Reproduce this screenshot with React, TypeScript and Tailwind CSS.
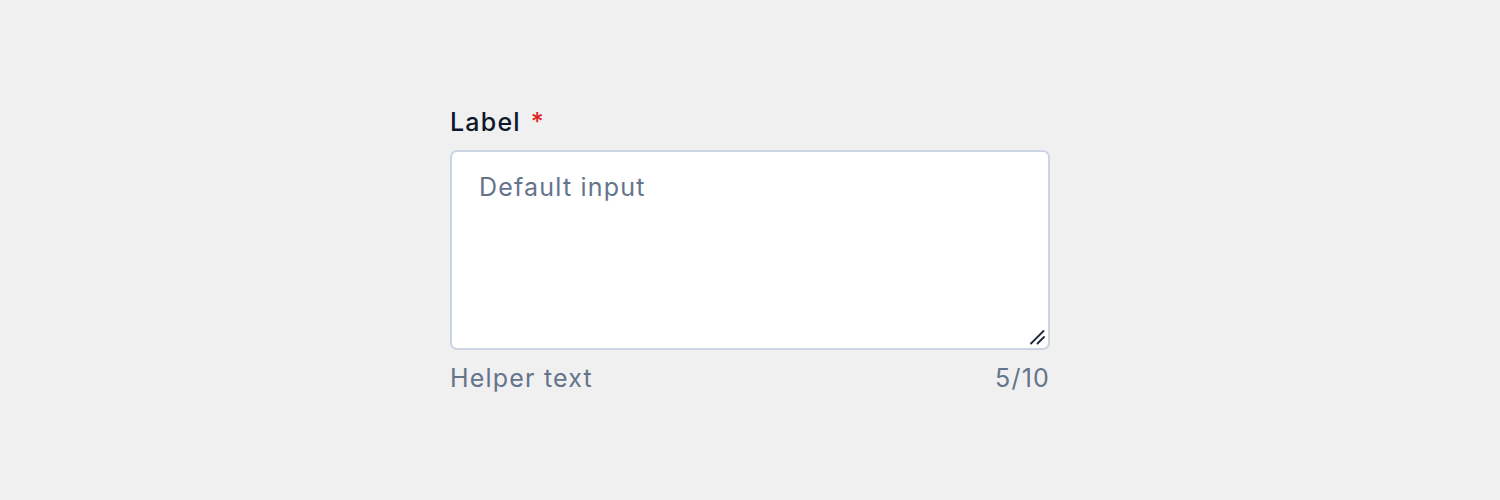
import React from "react";

export default function App() {
  return (
    <div className="w-[1500px] h-[500px] bg-[#f0f0f0] flex items-center justify-center" style={{ fontFamily: "Inter, 'Noto Sans', sans-serif" }}>
      <div className="w-[600px] flex flex-col gap-3">
        <label className="text-[25px] leading-8 tracking-[1.2px] text-[#0f172a] font-medium">
          Label<span className="ml-[10px] text-[#dc2626]">*</span>
        </label>
        <div className="relative w-[600px] h-[200px]">
          <textarea
            className="block w-[600px] h-[200px] bg-white border-2 border-[#cbd5e1] rounded-[7px] px-[27px] py-[19px] text-[25px] leading-8 tracking-[1.2px] text-[#0f172a] placeholder:text-[#64748b] outline-none resize-none"
            placeholder="Default input"
          />
          <svg className="absolute right-[4px] bottom-[4px] pointer-events-none" width="16" height="16" viewBox="0 0 16 16">
            <line x1="1" y1="13.5" x2="13.5" y2="1" stroke="#1e293b" strokeWidth="1.8" strokeLinecap="round" />
            <line x1="7.5" y1="13.5" x2="14" y2="7" stroke="#1e293b" strokeWidth="1.8" strokeLinecap="round" />
          </svg>
        </div>
        <div className="flex justify-between text-[25px] leading-8 tracking-[1.2px] text-[#64748b]">
          <span>Helper text</span>
          <span>5/10</span>
        </div>
      </div>
    </div>
  );
}
